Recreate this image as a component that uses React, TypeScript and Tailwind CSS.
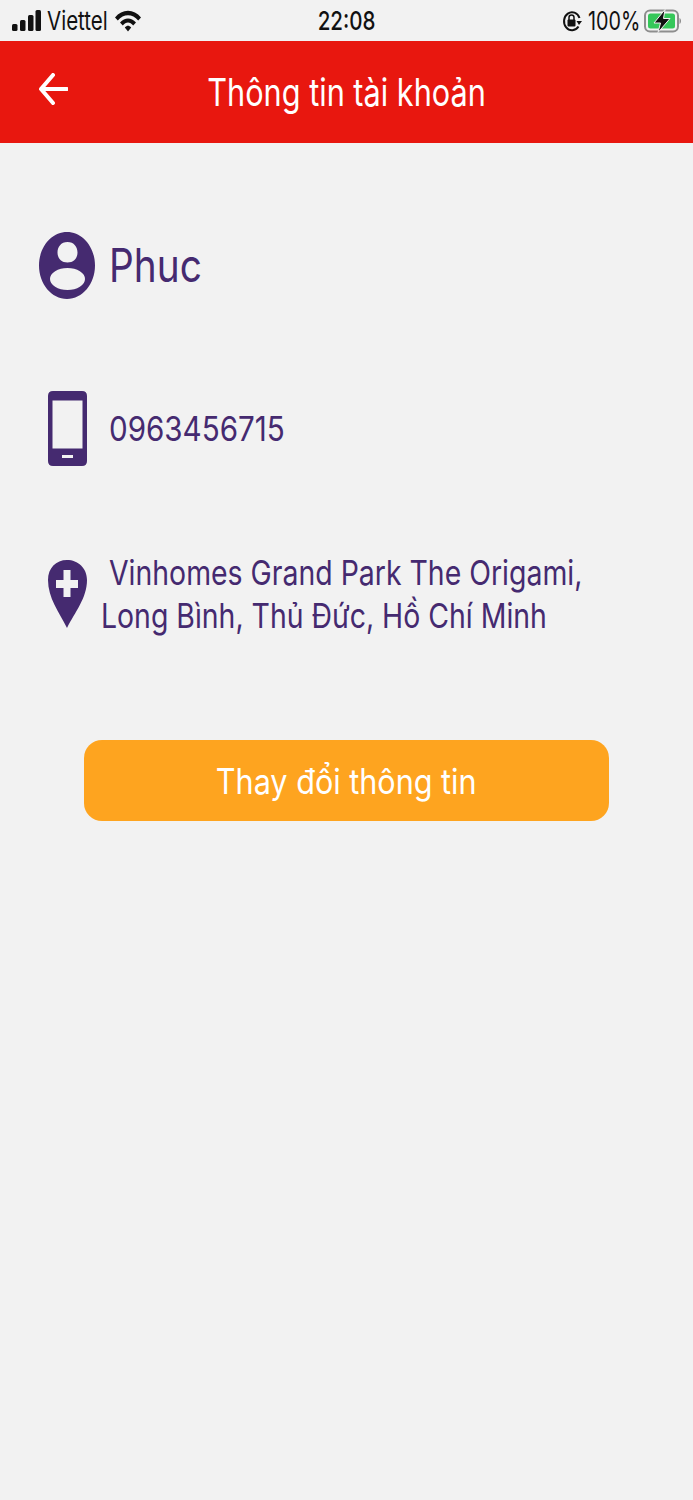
export default function App() {
  return (
    <div className="w-[693px] h-[1500px] bg-[#f2f2f2] overflow-hidden font-['Inter',sans-serif]">
      {/* status bar */}
      <div className="h-[41px] flex items-center justify-between relative text-[#111]">
        <div className="flex items-center pl-[12px]">
          <svg width="29" height="22" viewBox="0 0 29 22" fill="#111">
            <rect x="0" y="14" width="5.5" height="7" rx="1.5" />
            <rect x="8" y="10" width="5.5" height="11" rx="1.5" />
            <rect x="16" y="5" width="5.5" height="16" rx="1.5" />
            <rect x="23.5" y="0" width="5.5" height="21" rx="1.5" />
          </svg>
          <span className="ml-[6px] text-[26px] leading-[41px] origin-left scale-x-[0.79] w-[60px] whitespace-nowrap">Viettel</span>
          <svg width="26" height="22" viewBox="0 0 26 22" className="ml-[8px]" fill="#111">
            <path d="M0 7.5 C7-1.5 19-1.5 26 7.5 L23.2 10.5 C17.5 3.5 8.5 3.5 2.8 10.5 Z" />
            <path d="M5 12.5 C10 7 16 7 21 12.5 L18.2 15.5 C15 11.5 11 11.5 7.8 15.5 Z" />
            <path d="M9.8 17.5 C12 15 14 15 16.2 17.5 L13 21.5 Z" />
          </svg>
        </div>
        <span className="absolute left-0 right-0 text-center text-[26px] leading-[41px] font-medium scale-x-[0.79]">22:08</span>
        <div className="flex items-center pr-[11px]">
          <svg width="20" height="24" viewBox="0 0 20 24" fill="none" className="mr-[6px]">
            <path d="M16.5 17.5 A8 9 0 1 1 17.5 9" stroke="#111" strokeWidth="2" />
            <path d="M14.5 12 L20 12 L17 16 Z" fill="#111" />
            <rect x="5.5" y="10.5" width="8" height="7" rx="1" fill="#111" />
            <path d="M7 11 V8.5 a2.5 2.5 0 0 1 5 0 V11" stroke="#111" strokeWidth="1.5" />
          </svg>
          <span className="text-[26px] leading-[41px] w-[52px] mr-[4px] origin-left scale-x-[0.76] whitespace-nowrap">100%</span>
          <svg width="38" height="24" viewBox="0 0 38 24" fill="none">
            <rect x="1" y="1.5" width="33" height="21" rx="5" stroke="#8e8e8e" strokeWidth="2" />
            <rect x="4" y="4.5" width="27" height="15" rx="2.5" fill="#35c759" />
            <path d="M35.5 9 C37.5 10 37.5 14 35.5 15 Z" fill="#8e8e8e" />
            <path d="M21 0.5 L10 14 H16.5 L14 23.5 L26 9.5 H19.5 Z" fill="#111" stroke="#f2f2f2" strokeWidth="1" />
          </svg>
        </div>
      </div>

      {/* header */}
      <div className="h-[102px] bg-[#e8170f] relative flex items-center justify-center">
        <svg width="30" height="32" viewBox="0 0 30 32" fill="none" stroke="#fff" strokeWidth="4" className="absolute left-[38px] top-[32px]">
          <path d="M29 16 H3 M15 2 L3 16 L15 30" strokeLinecap="round" strokeLinejoin="round" />
        </svg>
        <span className="text-white text-[38px] leading-[50px] whitespace-nowrap scale-x-[0.807]">Thông tin tài khoản</span>
      </div>

      {/* content */}
      <div className="pl-[39px] text-[#452a70]">
        <div className="mt-[89px] flex items-center h-[67px]">
          <svg width="56" height="67" viewBox="0 0 56 67" className="shrink-0">
            <path
              fillRule="evenodd"
              fill="#452a70"
              d="M28 0 C43.5 0 56 15 56 33.5 C56 52 43.5 67 28 67 C12.5 67 0 52 0 33.5 C0 15 12.5 0 28 0 Z M28.5 10 C22 10 18.5 15 18.5 20.5 C18.5 26.5 22.5 30.5 28.5 30.5 C34.5 30.5 38.5 26.5 38.5 20.5 C38.5 15 35 10 28.5 10 Z M11 47 a17.5 11 0 1 0 35 0 a17.5 11 0 1 0 -35 0 Z"
            />
          </svg>
          <span className="ml-[14px] -mt-[2px] text-[46px] leading-[60px] origin-left scale-x-[0.843] whitespace-nowrap">Phuc</span>
        </div>

        <div className="mt-[92px] flex items-center h-[75px]">
          <svg width="56" height="75" viewBox="0 0 56 75" className="shrink-0">
            <path
              fillRule="evenodd"
              fill="#452a70"
              d="M14 0 H43 Q48 0 48 5 V70 Q48 75 43 75 H14 Q9 75 9 70 V5 Q9 0 14 0 Z M13.5 9.5 V57.5 H43.5 V9.5 Z M23 64 V67 H34 V64 Z"
            />
          </svg>
          <span className="ml-[14px] text-[34px] leading-[44px] origin-left scale-x-[0.87] whitespace-nowrap">0963456715</span>
        </div>

        <div className="mt-[85px] flex items-start">
          <svg width="56" height="68" viewBox="0 0 56 68" className="shrink-0 mt-[9px]">
            <path
              fillRule="evenodd"
              fill="#452a70"
              d="M28 68 C20 52 9 38 9 20 C9 8 17 0 28 0 C39 0 48 8 48 20 C48 38 36 52 28 68 Z M24.5 10 V20 H17 V28 H24.5 V37 H31.5 V28 H39 V20 H31.5 V10 Z"
            />
          </svg>
          <div className="text-[34px] leading-[43px]">
            <div className="ml-[14px] origin-left scale-x-[0.836] whitespace-nowrap">Vinhomes Grand Park The Origami,</div>
            <div className="ml-[6px] origin-left scale-x-[0.836] whitespace-nowrap">Long Bình, Thủ Đức, Hồ Chí Minh</div>
          </div>
        </div>
      </div>

      <div className="mt-[103px] mx-[84px] h-[81px] rounded-[18px] bg-[#fea41f] flex items-center justify-center">
        <span className="text-white text-[35px] leading-[46px] whitespace-nowrap scale-x-[0.874]">Thay đổi thông tin</span>
      </div>
    </div>
  );
}
